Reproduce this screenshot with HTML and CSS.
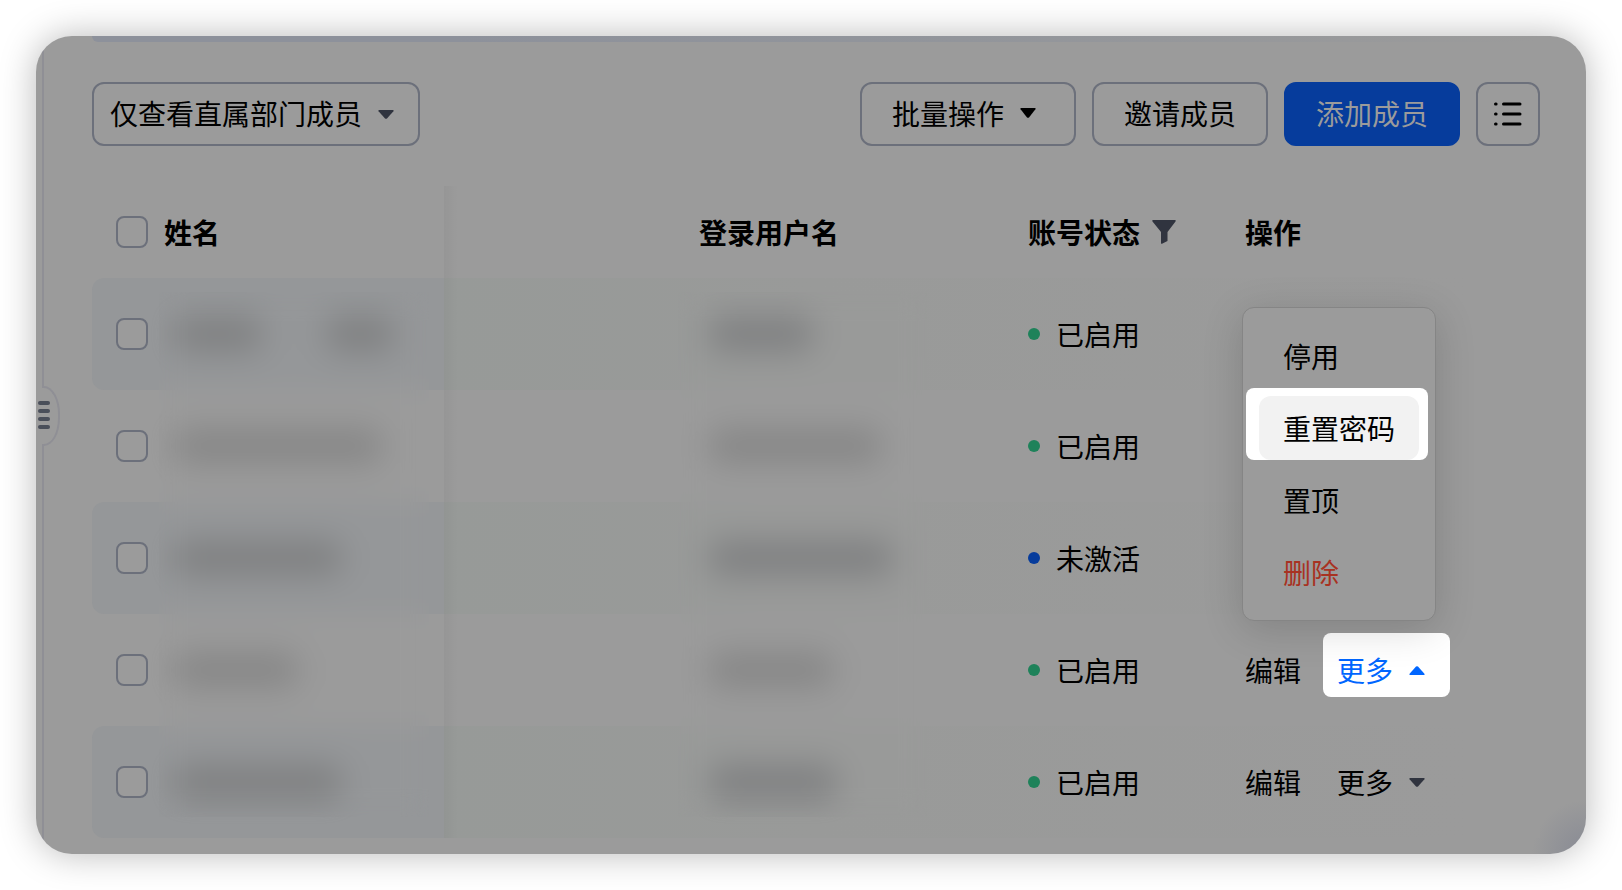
FILE: index.html
```html
<!DOCTYPE html>
<html lang="zh-CN">
<head>
  <meta charset="UTF-8">
  <meta name="viewport" content="width=device-width, initial-scale=1.0">
  <title>成员管理</title>
  <link rel="stylesheet" href="styles.css">
</head>
<body>
  <main class="card">
    <button class="handle" type="button" aria-label="收起侧栏"><i></i><i></i><i></i><i></i></button>
    <div class="banner"></div>

    <div class="toolbar">
      <div class="filter">
        <select class="btn" aria-label="成员范围">
          <option>仅查看直属部门成员</option>
        </select>
        <svg class="caret" viewBox="0 0 16 9"><path d="M1 0h14q1 .3.4 1.2L9 8.4q-1 .9-2 0L.6 1.2Q0 .3 1 0z"/></svg>
      </div>
      <div class="actions">
        <button class="btn batch" type="button">批量操作
          <svg class="caret dark" viewBox="0 0 16 10"><path d="M1 0h14q1 .3.4 1.2L9 9.4q-1 .9-2 0L.6 1.2Q0 .3 1 0z"/></svg>
        </button>
        <button class="btn" type="button">邀请成员</button>
        <button class="btn primary" type="button">添加成员</button>
        <button class="btn list" type="button" aria-label="列表设置">
          <svg width="28" height="28" viewBox="0 0 28 28" fill="none" stroke="#000" stroke-width="3" stroke-linecap="round"><path d="M9.5 4H26M9.5 14H26M9.5 24H26M1.5 4h.6M1.5 14h.6M1.5 24h.6"/></svg>
        </button>
      </div>
    </div>

    <div class="members">
      <table>
        <colgroup>
          <col class="col-name"><col class="col-gap"><col class="col-user"><col class="col-state"><col>
        </colgroup>
        <thead>
          <tr>
            <th><div class="name"><input type="checkbox" id="all"><label for="all">姓名</label></div></th>
            <th></th>
            <th>登录用户名</th>
            <th><div class="state-head">账号状态
              <svg width="24" height="24" viewBox="0 0 24 24" fill="#30343f"><path d="M1 0h22q1.2.4.5 1.6L15.5 12v9l-5.500 2.800q-.8.2-1-.6V12L.5 1.600Q-.2.4 1 0z"/></svg>
            </div></th>
            <th>操作</th>
          </tr>
        </thead>
        <tbody>
          <tr>
            <td><div class="name"><input type="checkbox" aria-label="选择成员"><span class="blob" style="width:88px"></span><span class="blob far" style="width:68px"></span></div></td>
            <td></td>
            <td><span class="blob" style="width:104px"></span></td>
            <td><span class="state">已启用</span></td>
            <td></td>
          </tr>
          <tr>
            <td><div class="name"><input type="checkbox" aria-label="选择成员"><span class="blob light" style="width:208px"></span></div></td>
            <td></td>
            <td><span class="blob light" style="width:172px"></span></td>
            <td><span class="state">已启用</span></td>
            <td></td>
          </tr>
          <tr>
            <td><div class="name"><input type="checkbox" aria-label="选择成员"><span class="blob" style="width:168px"></span></div></td>
            <td></td>
            <td><span class="blob" style="width:184px"></span></td>
            <td><span class="state inactive">未激活</span></td>
            <td></td>
          </tr>
          <tr>
            <td><div class="name"><input type="checkbox" aria-label="选择成员"><span class="blob light" style="width:124px"></span></div></td>
            <td></td>
            <td><span class="blob light" style="width:124px"></span></td>
            <td><span class="state">已启用</span></td>
            <td><div class="ops">
              <a href="#">编辑</a>
              <div class="dropdown">
                <button class="more open" type="button">更多
                  <svg class="caret" viewBox="0 0 16 9"><path d="M1 9h14q1-.3.4-1.200L9 .6Q8-.3 7 .6L.6 7.800Q0 8.700 1 9z"/></svg>
                </button>
                <ul class="menu">
                  <li><button type="button">停用</button></li>
                  <li class="active"><button type="button">重置密码</button></li>
                  <li><button type="button">置顶</button></li>
                  <li><button class="danger" type="button">删除</button></li>
                </ul>
              </div>
            </div></td>
          </tr>
          <tr>
            <td><div class="name"><input type="checkbox" aria-label="选择成员"><span class="blob" style="width:168px"></span></div></td>
            <td></td>
            <td><span class="blob" style="width:128px"></span></td>
            <td><span class="state">已启用</span></td>
            <td><div class="ops">
              <a href="#">编辑</a>
              <div class="dropdown">
                <button class="more" type="button">更多
                  <svg class="caret" viewBox="0 0 16 9"><path d="M1 0h14q1 .3.4 1.200L9 8.400q-1 .9-2 0L.6 1.200Q0 .3 1 0z"/></svg>
                </button>
              </div>
            </div></td>
          </tr>
        </tbody>
      </table>
      <div class="blur blur-name"></div>
      <div class="blur blur-user"></div>
    </div>
  </main>
</body>
</html>
```
FILE: styles.css
```css
* {
  margin: 0;
  padding: 0;
  box-sizing: border-box;
}

body {
  padding: 36px;
  background: #fff;
  color: #000;
  font-family: "Noto Sans CJK SC", sans-serif;
  font-size: 28px;
  line-height: 40px;
}

button, select {
  font: inherit;
  color: inherit;
  background: none;
  border: none;
}

a {
  color: inherit;
  text-decoration: none;
}

.card {
  position: relative;
  padding: 0 46px 16px 56px;
  border-radius: 36px;
  background:
    linear-gradient(#8f8f95, #8f8f95) 6px 0 / 2px 100% no-repeat,
    radial-gradient(circle at 100% 100%, #8b8d95 10px, #9b9b9b 54px) 100% 100% / 64px 64px no-repeat,
    #9b9b9b;
  box-shadow: 0 0 36px rgba(0, 0, 0, .28);
}

/* sidebar handle */
.handle {
  position: absolute;
  left: 0;
  top: 350px;
  width: 24px;
  height: 60px;
  padding: 0 0 2px 2px;
  display: flex;
  flex-direction: column;
  justify-content: center;
  gap: 4px;
  background: #9b9b9b;
  border: 2px solid #8f8f95;
  border-left: none;
  border-radius: 0 16px 16px 0 / 0 28px 28px 0;
}
.handle::before {
  content: "";
  position: absolute;
  left: 0;
  top: -2px;
  width: 6px;
  height: 60px;
  background: #9b9b9b;
}
.handle i {
  position: relative;
  width: 12px;
  height: 4px;
  border-radius: 2px;
  background: #4a4f5a;
}

.banner {
  height: 6px;
  border-radius: 0 0 10px 10px;
  background: linear-gradient(90deg, #8d919b 25%, #92959b 60%, #9b9b9b);
}

/* toolbar */
.toolbar {
  display: flex;
  justify-content: space-between;
  padding: 40px 0;
}
.actions {
  display: flex;
  gap: 16px;
}
.btn {
  height: 64px;
  padding: 0 30px 2px;
  border: 2px solid #6c707b;
  border-radius: 12px;
}
.filter {
  position: relative;
}
.filter .btn {
  width: 328px;
  padding: 0 16px 2px;
  appearance: none;
}
.filter .caret {
  position: absolute;
  right: 26px;
  top: 28px;
}
.caret {
  width: 16px;
  height: 9px;
  fill: #30343f;
}
.caret.dark {
  height: 10px;
  fill: #000;
}
.batch {
  display: flex;
  align-items: center;
  gap: 16px;
  padding-right: 38px;
}
.primary {
  background: #063c9c;
  border-color: #063c9c;
  color: #9b9b9b;
}
.list {
  width: 64px;
  padding: 0;
  display: grid;
  place-items: center;
}

/* table */
.members {
  position: relative;
}
table {
  width: 100%;
  table-layout: fixed;
  border-spacing: 0;
}
.col-name { width: 352px; }
.col-gap { width: 239px; }
.col-user { width: 329px; }
.col-state { width: 217px; }
th {
  height: 92px;
  padding-left: 16px;
  text-align: left;
  font-weight: 700;
}
td {
  height: 112px;
  padding-left: 16px;
}
th:first-child, td:first-child {
  position: relative;
  padding-left: 24px;
}
th:first-child::after, td:first-child::after {
  content: "";
  position: absolute;
  left: 100%;
  top: 0;
  width: 14px;
  height: 100%;
  background: linear-gradient(90deg, rgba(0, 0, 0, .035), transparent);
}
tbody tr:nth-child(odd) {
  background: linear-gradient(90deg, transparent 352px, #979a98 352px, #999a99 50%, #9b9b9b 95%);
}
tbody tr:nth-child(odd) td:first-child {
  background: #959799;
  border-radius: 12px 0 0 12px;
}
.name {
  display: flex;
  align-items: center;
  gap: 16px;
}
input[type="checkbox"] {
  appearance: none;
  width: 32px;
  height: 32px;
  border: 2px solid #6c707b;
  border-radius: 8px;
  background: #9b9b9b;
}
.state-head {
  display: flex;
  align-items: center;
  gap: 12px;
}
.state {
  display: flex;
  align-items: center;
  gap: 16px;
}
.state::before {
  content: "";
  width: 12px;
  height: 12px;
  border-radius: 50%;
  background: #1e825a;
}
.state.inactive::before {
  background: #063c9c;
}

/* masked values */
.blob {
  display: block;
  height: 36px;
  margin-left: 10px;
  border-radius: 16px;
  background: #808182;
  filter: blur(10px);
}
.blob.light {
  background: #878787;
}
.blob.far {
  margin-left: 48px;
}
.blur {
  position: absolute;
  top: 106px;
  bottom: 21px;
  backdrop-filter: blur(12px);
}
.blur-name {
  left: 67px;
  width: 270px;
}
.blur-user {
  left: 586px;
  width: 249px;
}

/* row actions */
.ops {
  display: flex;
  align-items: center;
  gap: 22px;
}
.dropdown {
  position: relative;
  margin-bottom: 10px;
}
.more {
  display: flex;
  align-items: center;
  gap: 16px;
  height: 64px;
  padding: 10px 25px 0 14px;
  border-radius: 8px;
}
.more.open {
  background: #fff;
  color: #0066ff;
}
.more.open .caret {
  fill: #0066ff;
}
.menu {
  position: absolute;
  right: 14px;
  bottom: calc(100% + 12px);
  z-index: 2;
  display: grid;
  gap: 8px;
  padding: 16px;
  list-style: none;
  background: #9b9b9b;
  border: 1px solid #858585;
  border-radius: 12px;
  box-shadow: 0 8px 40px rgba(0, 0, 0, .16);
}
.menu li {
  position: relative;
}
.menu button {
  position: relative;
  width: 160px;
  height: 64px;
  padding-left: 24px;
  display: block;
  text-align: left;
  border-radius: 12px;
}
.menu .active::before {
  content: "";
  position: absolute;
  inset: -8px -9px 0 -13px;
  border-radius: 8px;
  background: #fff;
}
.menu .active button {
  background: #f2f2f2;
}
.menu .danger {
  color: #a83222;
}
```
